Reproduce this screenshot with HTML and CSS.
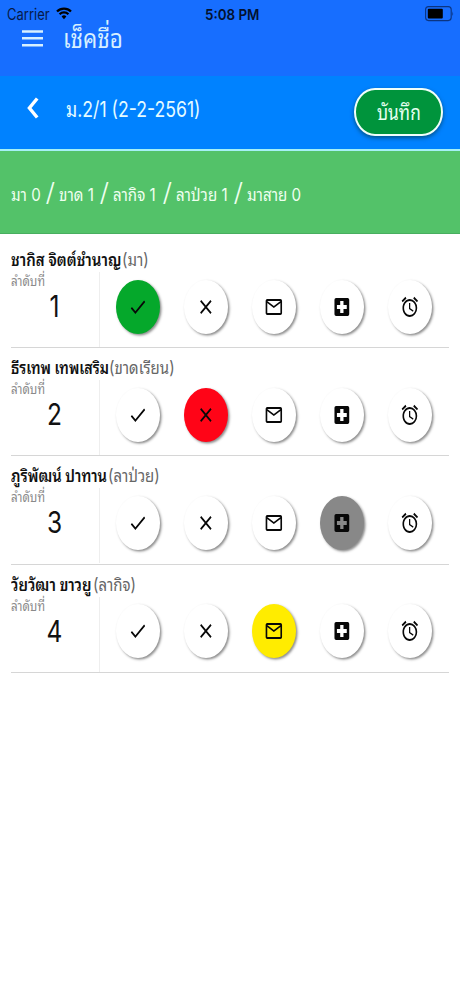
FILE: index.html
```html
<!DOCTYPE html>
<html lang="th">
<head>
<meta charset="utf-8">
<title>เช็คชื่อ</title>
<link rel="stylesheet" href="styles.css">
</head>
<body>
<svg class="defs" width="0" height="0">
  <symbol id="check" viewBox="0 0 24 24" preserveAspectRatio="none"><path d="M9 16.17L4.83 12l-1.42 1.41L9 19 21 7l-1.41-1.41z"/></symbol>
  <symbol id="close" viewBox="0 0 24 24" preserveAspectRatio="none"><path d="M19 6.41L17.59 5 12 10.59 6.41 5 5 6.41 10.59 12 5 17.59 6.41 19 12 13.41 17.59 19 19 17.59 13.41 12z"/></symbol>
  <symbol id="mail" viewBox="0 0 24 24" preserveAspectRatio="none"><path d="M20 4H4c-1.1 0-2 .9-2 2v12c0 1.1.9 2 2 2h16c1.1 0 2-.9 2-2V6c0-1.1-.9-2-2-2zm0 14H4V8l8 5 8-5v10zm-8-7L4 6h16l-8 5z"/></symbol>
  <symbol id="sick" viewBox="0 0 24 24" preserveAspectRatio="none"><path d="M19 3H5c-1.1 0-2 .9-2 2v14c0 1.1.9 2 2 2h14c1.1 0 2-.9 2-2V5c0-1.1-.9-2-2-2zm-1 11h-4v4h-4v-4H6v-4h4V6h4v4h4v4z"/></symbol>
  <symbol id="alarm" viewBox="0 0 24 24" preserveAspectRatio="none"><path d="M22 5.72l-4.6-3.86-1.29 1.53 4.6 3.86L22 5.72zM7.88 3.39L6.6 1.86 2 5.71l1.29 1.53 4.59-3.85zM12.5 8H11v6l4.75 2.85.75-1.23-4-2.37V8zM12 4c-4.97 0-9 4.03-9 9s4.02 9 9 9a9 9 0 0 0 0-18zm0 16c-3.87 0-7-3.13-7-7s3.13-7 7-7 7 3.13 7 7-3.13 7-7 7z"/></symbol>
</svg>
<header class="top">
  <div class="status">
    <span class="carrier">Carrier</span>
    <svg class="wifi" viewBox="0 0 16 13"><path d="M1 5a10 10 0 0 1 14 0M3.6 7.8a6.2 6.2 0 0 1 8.8 0" fill="none" stroke="#000" stroke-width="2.3"/><path d="M5.6 10a3.4 3.4 0 0 1 4.8 0L8 12.8z"/></svg>
    <span class="time">5:08 PM</span>
    <svg class="battery" viewBox="0 0 29 16"><rect x=".6" y=".6" width="25.6" height="14" rx="3" fill="none" stroke="#0b3480" stroke-width="1.1"/><rect x="2.8" y="2.8" width="15" height="9.8" rx="1"/><path d="M27.4 5.2q1.4 2.4 0 4.8z" fill="#0b3480"/></svg>
  </div>
  <div class="title"><svg class="menu" viewBox="0 0 21 17"><path d="M0 1.4h21M0 8.3h21M0 15.2h21" stroke="#d8f0ff" stroke-width="2.5"/></svg><h1>เช็คชื่อ</h1></div>
</header>
<div class="bar">
  <svg class="back" viewBox="0 0 12 22"><path d="M10.2 1.5L2.4 11l7.8 9.5" fill="none" stroke="#fff" stroke-width="3.4"/></svg>
  <span class="room">ม.2/1 (2-2-2561)</span>
  <button class="save"><span>บันทึก</span></button>
</div>
<div class="summary"><span class="s1">มา 0</span><i>/</i><span class="s2">ขาด 1</span><i>/</i><span class="s3">ลากิจ 1</span><i>/</i><span class="s4">ลาป่วย 1</span><i>/</i><span class="s5">มาสาย 0</span></div>
<main class="list" id="list"></main>
<script src="app.js"></script>
</body>
</html>
```
FILE: styles.css
```css
* { box-sizing: border-box; }
body { margin: 0; background: #fff; color: #111; font-family: Inter, "Noto Sans Thai Looped", Loma, Garuda, Umpush, sans-serif; }
.defs { position: absolute; }
span, h1, b, em, i { display: inline-block; white-space: nowrap; font-style: normal; transform-origin: 0 50%; }
.top { height: 76px; background: #176eff; }
.status { display: flex; align-items: center; height: 28px; padding: 0 6px 0 7px; color: #061a48; }
.carrier { width: 49px; font-size: 13px; transform: scale(1, 1.2); }
.wifi { width: 16px; height: 14px; margin-top: -2px; }
.time { width: 56px; margin-left: 133px; font-size: 13px; font-weight: 600; color: #03112f; transform: scale(1.03, 1.15); }
.battery { width: 29px; height: 16px; margin-left: auto; }
.title { display: flex; align-items: center; height: 22px; padding-left: 22px; }
.menu { width: 21px; height: 17px; margin-top: -2px; }
h1 { margin: -3px 0 0 20px; font-size: 22px; line-height: 22px; font-weight: 400; color: #d8f0ff; transform: scale(1.02, 1.2); }
.bar { display: flex; align-items: center; height: 75px; padding: 0 17px 6px 27px; background: #0082ff; border-bottom: 2px solid #a5f0f5; }
.back { width: 12px; height: 22px; margin-top: -4px; }
.room { margin: -5px 0 0 27px; font-size: 18px; color: #e5fbff; transform: scale(.98, 1.2); }
.save { width: 89px; height: 48px; margin: 4px 0 0 auto; padding: 0; border: 2.5px solid #f0fffa; border-radius: 21px / 24px; background: #00943c; color: #e5fff0; font: 18px Inter, "Noto Sans Thai Looped", Loma, Garuda, Umpush, sans-serif; box-shadow: 0 2px 4px #00538a; }
.save span { transform-origin: 50%; transform: translateY(-2px) scale(.96, 1.2); }
.summary { display: flex; align-items: center; height: 83px; padding: 2px 0 0 11px; background: #53c269; border-bottom: 1px solid #48ae5f; color: #effff0; font-size: 14px; }
.summary span { transform: scale(1.08, 1.2); }
.summary i { width: 18px; text-align: center; font-size: 24px; font-weight: 300; transform: translate(-1px, -1px) scale(1.15, 1.05); }
.s1 { width: 30px; } .s2 { width: 36px; } .s3 { width: 45px; } .s4 { width: 53px; }
.list { padding: 6px 11px 0; }
.row { height: 108.2px; border-bottom: 1.5px solid #d6d6d6; }
.name { display: flex; height: 32px; line-height: 37px; font-size: 15px; }
.name b { width: 111px; font-weight: 600; transform: scale(1, 1.2); }
.r2 .name b { width: 98px; transform: scale(.95, 1.2); }
.r3 .name b { width: 97px; transform: scale(.98, 1.2); }
.r4 .name b { width: 82px; }
.name em { color: #666; transform: scale(1, 1.2); }
.body { display: flex; height: 75px; }
.order { width: 89px; border-right: 1px solid #eee; }
.order span { display: block; height: 17px; line-height: 17px; font-size: 12px; color: #8a8a8a; transform: scale(.97, 1.2); }
.order b { display: block; width: 87px; text-align: center; font-size: 25px; line-height: 35px; font-weight: 400; transform-origin: 50%; transform: scale(.98, 1.2); }
.picks { display: flex; gap: 24px; padding: 7.5px 0 0 16px; }
.pick { display: grid; place-items: center; width: 44px; height: 54px; border-radius: 50%; background: #fff; box-shadow: 1.5px 1.5px 2.5px rgba(0,0,0,.45); }
.pick svg { width: 19.7px; height: 24px; fill: #080808; }
.pick.green { background: #05a82b; }
.pick.red { background: #ff0417; }
.pick.gray { background: #888; }
.pick.yellow { background: #ffec00; }
```
FILE: app.js
```js
const icons = ["check", "close", "mail", "sick", "alarm"];
const people = [
  ["ชากิส จิตต์ชำนาญ", "(มา)", 0, "green"],
  ["ธีรเทพ เทพเสริม", "(ขาดเรียน)", 1, "red"],
  ["ภูริพัฒน์ ปาทาน", "(ลาป่วย)", 3, "gray"],
  ["วัยวัฒา ขาวยู", "(ลากิจ)", 2, "yellow"]
];
document.getElementById("list").innerHTML = people.map(([name, status, active, tone], i) => `
<section class="row r${i + 1}">
  <div class="name"><b>${name}</b><em>${status}</em></div>
  <div class="body">
    <div class="order"><span>ลำดับที่</span><b>${i + 1}</b></div>
    <div class="picks">${icons.map((icon, n) => `<div class="pick ${n === active ? tone : ""}"><svg><use href="#${icon}"/></svg></div>`).join("")}</div>
  </div>
</section>`).join("");
```
